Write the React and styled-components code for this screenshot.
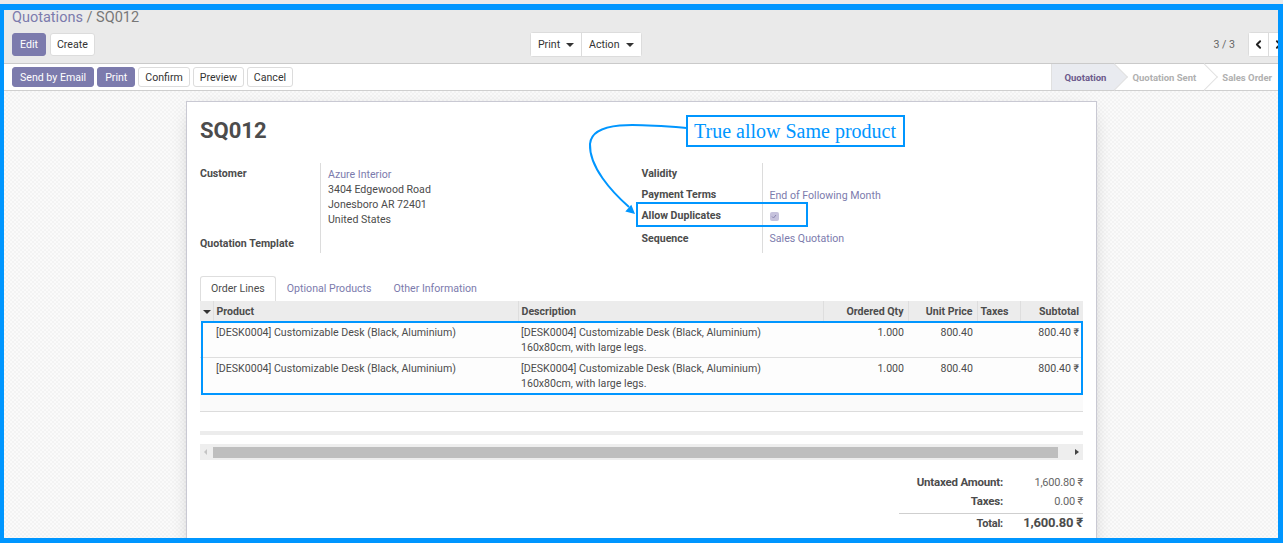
import React from "react";
import styled, { createGlobalStyle, css } from "styled-components";
import { ChevronLeft, ChevronRight } from "lucide-react";

const purple = "#7c7bad";
const text = "#4c4c4c";
const blue = "#0096ff";

const GlobalStyle = createGlobalStyle`
  html, body {
    margin: 0;
    padding: 0;
    overflow: hidden;
    background: #f7f7f7;
  }
  body {
    font-family: Roboto, "Liberation Sans", sans-serif;
    font-size: 10.6px;
    color: ${text};
  }
  * { box-sizing: border-box; }
`;

const ControlPanel = styled.div`
  background: #eaeaea;
  border-bottom: 1px solid #cacaca;
  padding: 9px 12px 8px 12px;
  height: 64px;
`;

const Breadcrumb = styled.div`
  font-size: 14.5px;
  line-height: 18px;
  color: #777;
  a {
    color: ${purple};
    text-decoration: none;
  }
`;

const CpBottom = styled.div`
  display: flex;
  margin-top: 5px;
`;

const CpHalf = styled.div`
  flex: 1;
  display: flex;
  align-items: center;
  justify-content: ${({ $align }) => $align || "space-between"};
`;

const ButtonRow = styled.div`
  display: flex;
  gap: ${({ $gap }) => $gap || "4px"};
`;

const Button = styled.button`
  font-family: inherit;
  font-size: 10.6px;
  height: ${({ $h }) => $h || "23px"};
  padding: 0 ${({ $px }) => $px || "7px"};
  border-radius: 3px;
  cursor: pointer;
  display: flex;
  align-items: center;
  gap: 6px;
  ${({ $primary }) =>
    $primary
      ? css`
          background: ${purple};
          border: 1px solid ${purple};
          color: #fff;
        `
      : css`
          background: #fff;
          border: 1px solid #dcdcdc;
          color: #333;
        `}
`;

const Group = styled.div`
  display: flex;
  border-radius: 3px;
  background: #fff;
  border: 1px solid #dcdcdc;
  & > button {
    border: none;
    border-radius: 0;
  }
  & > button + button {
    border-left: 1px solid #dcdcdc;
  }
`;

const Caret = styled.span`
  display: inline-block;
  vertical-align: middle;
  width: 0;
  height: 0;
  border-left: 4px solid transparent;
  border-right: 4px solid transparent;
  border-top: 4px solid #333;
`;

const Pager = styled.div`
  display: flex;
  align-items: center;
  gap: 13px;
  margin-right: -17px;
  color: #666;
`;

const PagerValue = styled.span`
  font-size: 10.6px;
`;

const PagerButton = styled.button`
  width: 19px;
  height: 23px;
  background: #fff;
  border: none;
  display: flex;
  align-items: center;
  justify-content: center;
  color: #222;
  padding: 0;
`;

const StatusBar = styled.div`
  background: #fff;
  border-bottom: 1px solid #cfcfcf;
  height: 27px;
  display: flex;
  align-items: center;
  justify-content: space-between;
  padding-left: 12px;
`;

const Stages = styled.div`
  display: flex;
  align-self: stretch;
  padding-right: 11px;
`;

const Stage = styled.div`
  position: relative;
  display: flex;
  align-items: center;
  flex-shrink: 0;
  font-size: 9.5px;
  font-weight: 700;
  white-space: nowrap;
  padding: 0 ${({ $last }) => ($last ? "0" : "9px")} 0 ${({ $first }) => ($first ? "13px" : "17px")};
  color: ${({ $active }) => ($active ? "#6c5a8c" : "#b0b0b0")};
  background: ${({ $active }) => ($active ? "#e9ebf0" : "#fff")};
  border-left: ${({ $first }) => ($first ? "1px solid #e0e0e0" : "none")};
  & > span {
    position: relative;
    z-index: 2;
  }
  ${({ $last }) =>
    !$last &&
    css`
      &::after {
        content: "";
        position: absolute;
        right: -9px;
        top: 50%;
        width: 18px;
        height: 18px;
        transform: translateY(-50%) rotate(45deg);
        background: inherit;
        border-top: 1px solid #e2e2e2;
        border-right: 1px solid #e2e2e2;
        z-index: 1;
      }
    `}
`;

const PageArea = styled.div`
  min-height: calc(100vh - 91px);
  padding-top: 10px;
  background-color: #f7f7f7;
  background-image: repeating-conic-gradient(#f3f3f3 0 25%, #fafafa 0 50%);
  background-size: 4px 4px;
`;

const Sheet = styled.div`
  position: relative;
  width: 911px;
  margin: 0 auto;
  min-height: 470px;
  background: #fff;
  border: 1px solid #c9c9d3;
  box-shadow: 0 5px 20px -10px rgba(0, 0, 0, 0.4);
  padding: 14px 13px 0 13px;
`;

const Title = styled.h1`
  margin: 0;
  font-size: 22px;
  line-height: 30px;
  font-weight: 700;
  color: ${text};
`;

const Groups = styled.div`
  display: flex;
  margin-top: 17px;
`;

const FieldGroup = styled.div`
  flex: 1;
  display: grid;
  grid-template-columns: 120px 1fr;
  align-content: start;
`;

const Label = styled.div`
  font-weight: 700;
  line-height: 15px;
  padding-top: ${({ $pt }) => $pt || "3px"};
  height: ${({ $h }) => $h || "21px"};
  color: ${text};
`;

const Value = styled.div`
  border-left: 1px solid #dcdcdc;
  padding-left: 7px;
  line-height: 15px;
  padding-top: ${({ $pt }) => $pt || "3px"};
  height: ${({ $h }) => $h || "21px"};
  color: ${({ $link }) => ($link ? purple : text)};
`;

const Link = styled.span`
  color: ${purple};
`;

const Checkbox = styled.span`
  display: inline-flex;
  align-items: center;
  justify-content: center;
  width: 9px;
  height: 9px;
  border-radius: 2px;
  background: #c6c2dc;
  margin-top: 2px;
`;

const Tabs = styled.div`
  display: flex;
  margin-top: 23px;
  height: 25px;
`;

const Tab = styled.div`
  padding: 0 10px;
  line-height: 23px;
  height: 25px;
  border: 1px solid ${({ $active }) => ($active ? "#dedede" : "transparent")};
  border-bottom: none;
  border-radius: 3px 3px 0 0;
  color: ${({ $active }) => ($active ? text : purple)};
  background: #fff;
`;

const Table = styled.table`
  width: 883px;
  table-layout: fixed;
  border-collapse: collapse;
`;

const Th = styled.th`
  background: #ececec;
  height: 20px;
  padding: 0 ${({ $right }) => ($right ? "4px" : "3px")};
  text-align: ${({ $right }) => ($right ? "right" : "left")};
  font-weight: 700;
  color: ${text};
  border-left: 1px solid #dedede;
  white-space: nowrap;
  &:first-child {
    border-left: none;
    padding: 0 0 0 3px;
  }
`;

const Td = styled.td`
  vertical-align: top;
  padding: 4px ${({ $right }) => ($right ? "4px" : "3px")} 0;
  line-height: 15px;
  text-align: ${({ $right }) => ($right ? "right" : "left")};
  color: ${text};
  white-space: ${({ $wrap }) => ($wrap ? "normal" : "nowrap")};
`;

const Tr = styled.tr`
  height: 36px;
  background: #fdfdfd;
  & + & td {
    border-top: 1px solid #dedede;
    padding-top: 3px;
  }
`;

const FillerRow = styled.div`
  height: 19px;
  background: #fafafa;
  border-bottom: 1px solid #dcdcdc;
`;

const FootBand = styled.div`
  height: 4px;
  margin-top: 19px;
  background: #ececec;
`;

const Scrollbar = styled.div`
  margin-top: 9px;
  height: 16px;
  background: #eeeeee;
  display: flex;
  align-items: center;
  padding: 0 4px;
  gap: 6px;
`;

const Thumb = styled.div`
  flex: 1;
  height: 11px;
  background: #bebebe;
  margin-right: 11px;
`;

const Tri = styled.span`
  width: 0;
  height: 0;
  border-top: 3px solid transparent;
  border-bottom: 3px solid transparent;
  ${({ $dir }) =>
    $dir === "left"
      ? css`border-right: 3px solid #c4c4c4;`
      : css`border-left: 4px solid #444;`}
`;

const Totals = styled.div`
  margin: 13px 0 0 auto;
  width: 184px;
  display: grid;
  grid-template-columns: 104px 80px;
`;

const TotLabel = styled.div`
  text-align: right;
  font-weight: 700;
  font-size: 11.5px;
  line-height: 19px;
  letter-spacing: -0.2px;
  ${({ $total }) =>
    $total &&
    css`
      border-top: 1px solid #cfcfcf;
      margin-top: 2px;
      padding-top: 2px;
      line-height: 16px;
      font-size: 11px;
    `}
`;

const TotValue = styled.div`
  text-align: right;
  color: #666;
  font-size: 11px;
  line-height: 19px;
  letter-spacing: -0.2px;
  ${({ $total }) =>
    $total &&
    css`
      border-top: 1px solid #cfcfcf;
      margin-top: 2px;
      padding-top: 1px;
      line-height: 16px;
      font-size: 13px;
      font-weight: 700;
      color: ${text};
    `}
`;

const Annotation = styled.div`
  position: absolute;
  left: 499px;
  top: 13px;
  width: 219px;
  height: 32px;
  border: 2px solid ${blue};
  background: #fff;
  color: ${blue};
  font-family: "Liberation Serif", serif;
  font-size: 20px;
  line-height: 28px;
  padding-left: 6px;
  white-space: nowrap;
  z-index: 2;
`;

const Highlight = styled.div`
  position: absolute;
  left: ${({ $x }) => $x}px;
  top: ${({ $y }) => $y}px;
  width: ${({ $w }) => $w}px;
  height: ${({ $h }) => $h}px;
  border: 2px solid ${blue};
  pointer-events: none;
`;

const ArrowSvg = styled.svg`
  position: absolute;
  left: 0;
  top: 0;
  pointer-events: none;
`;

const Frame = styled.div`
  position: fixed;
  left: 0;
  right: 0;
  top: 4px;
  bottom: 0;
  border-style: solid;
  border-color: ${blue};
  border-width: 6px 5px 5px 4px;
  pointer-events: none;
  z-index: 10;
`;

const rows = [1, 2];

const App = () => {
  return (
    <>
      <GlobalStyle />
      <ControlPanel>
        <Breadcrumb>
          <a>Quotations</a> / SQ012
        </Breadcrumb>
        <CpBottom>
          <CpHalf>
            <ButtonRow>
              <Button $primary>Edit</Button>
              <Button $px="6px">Create</Button>
            </ButtonRow>
            <Group>
              <Button $px="7px">
                Print <Caret />
              </Button>
              <Button $px="7px">
                Action <Caret />
              </Button>
            </Group>
          </CpHalf>
          <CpHalf $align="flex-end">
            <Pager>
              <PagerValue>3 / 3</PagerValue>
              <Group>
                <PagerButton>
                  <ChevronLeft size={13} strokeWidth={3.5} />
                </PagerButton>
                <PagerButton>
                  <ChevronRight size={13} strokeWidth={3.5} />
                </PagerButton>
              </Group>
            </Pager>
          </CpHalf>
        </CpBottom>
      </ControlPanel>

      <StatusBar>
        <ButtonRow $gap="3px">
          <Button $primary $h="20px" $px="7px">Send by Email</Button>
          <Button $primary $h="20px" $px="7px">Print</Button>
          <Button $h="20px" $px="6px">Confirm</Button>
          <Button $h="20px" $px="6px">Preview</Button>
          <Button $h="20px" $px="6px">Cancel</Button>
        </ButtonRow>
        <Stages>
          <Stage $active $first><span>Quotation</span></Stage>
          <Stage><span>Quotation Sent</span></Stage>
          <Stage $last><span>Sales Order</span></Stage>
        </Stages>
      </StatusBar>

      <PageArea>
        <Sheet>
          <Title>SQ012</Title>
          <Groups>
            <FieldGroup>
              <Label $h="72px">Customer</Label>
              <Value $h="72px" $pt="4px">
                <Link>Azure Interior</Link>
                <br />
                3404 Edgewood Road
                <br />
                Jonesboro AR 72401
                <br />
                United States
              </Value>
              <Label $h="18px" $pt="1px">Quotation Template</Label>
              <Value $h="18px" $pt="0" />
            </FieldGroup>
            <FieldGroup>
              <Label>Validity</Label>
              <Value />
              <Label>Payment Terms</Label>
              <Value $link $pt="4px">End of Following Month</Value>
              <Label $h="22px">Allow Duplicates</Label>
              <Value $h="22px">
                <Checkbox>
                  <svg width="6" height="5" viewBox="0 0 6 5">
                    <path d="M1 2.5 L2.5 4 L5 1" stroke="#8a86b0" strokeWidth="1" fill="none" />
                  </svg>
                </Checkbox>
              </Value>
              <Label $h="26px" $pt="4px">Sequence</Label>
              <Value $h="26px" $pt="4px" $link>Sales Quotation</Value>
            </FieldGroup>
          </Groups>

          <Tabs>
            <Tab $active>Order Lines</Tab>
            <Tab>Optional Products</Tab>
            <Tab>Other Information</Tab>
          </Tabs>

          <Table>
            <colgroup>
              <col style={{ width: 13 }} />
              <col style={{ width: 305 }} />
              <col style={{ width: 305 }} />
              <col style={{ width: 85 }} />
              <col style={{ width: 69 }} />
              <col style={{ width: 43 }} />
              <col style={{ width: 63 }} />
            </colgroup>
            <thead>
              <tr>
                <Th>
                  <Caret />
                </Th>
                <Th>Product</Th>
                <Th>Description</Th>
                <Th $right>Ordered Qty</Th>
                <Th $right>Unit Price</Th>
                <Th>Taxes</Th>
                <Th $right>Subtotal</Th>
              </tr>
            </thead>
            <tbody>
              {rows.map((r) => (
                <Tr key={r}>
                  <Td />
                  <Td>[DESK0004] Customizable Desk (Black, Aluminium)</Td>
                  <Td $wrap>
                    [DESK0004] Customizable Desk (Black, Aluminium)
                    <br />
                    160x80cm, with large legs.
                  </Td>
                  <Td $right>1.000</Td>
                  <Td $right>800.40</Td>
                  <Td />
                  <Td $right>800.40 ₹</Td>
                </Tr>
              ))}
            </tbody>
          </Table>
          <FillerRow />
          <FootBand />
          <Scrollbar>
            <Tri $dir="left" />
            <Thumb />
            <Tri $dir="right" />
          </Scrollbar>

          <Totals>
            <TotLabel>Untaxed Amount:</TotLabel>
            <TotValue>1,600.80 ₹</TotValue>
            <TotLabel>Taxes:</TotLabel>
            <TotValue>0.00 ₹</TotValue>
            <TotLabel $total>Total:</TotLabel>
            <TotValue $total>1,600.80 ₹</TotValue>
          </Totals>

          <ArrowSvg width="911" height="200" viewBox="0 0 911 200">
            <path
              d="M499 26 C 450 22, 405 18, 403 42 C 402 65, 425 90, 442 105"
              stroke={blue}
              strokeWidth="2"
              fill="none"
            />
            <polygon points="448,112 438.3,109.5 444.3,102.7" fill={blue} />
          </ArrowSvg>
          <Annotation>True allow Same product</Annotation>
          <Highlight $x={449} $y={100} $w={172} $h={25} />
          <Highlight $x={14} $y={219} $w={882} $h={74} />
        </Sheet>
      </PageArea>
      <Frame />
    </>
  );
};

export default App;
